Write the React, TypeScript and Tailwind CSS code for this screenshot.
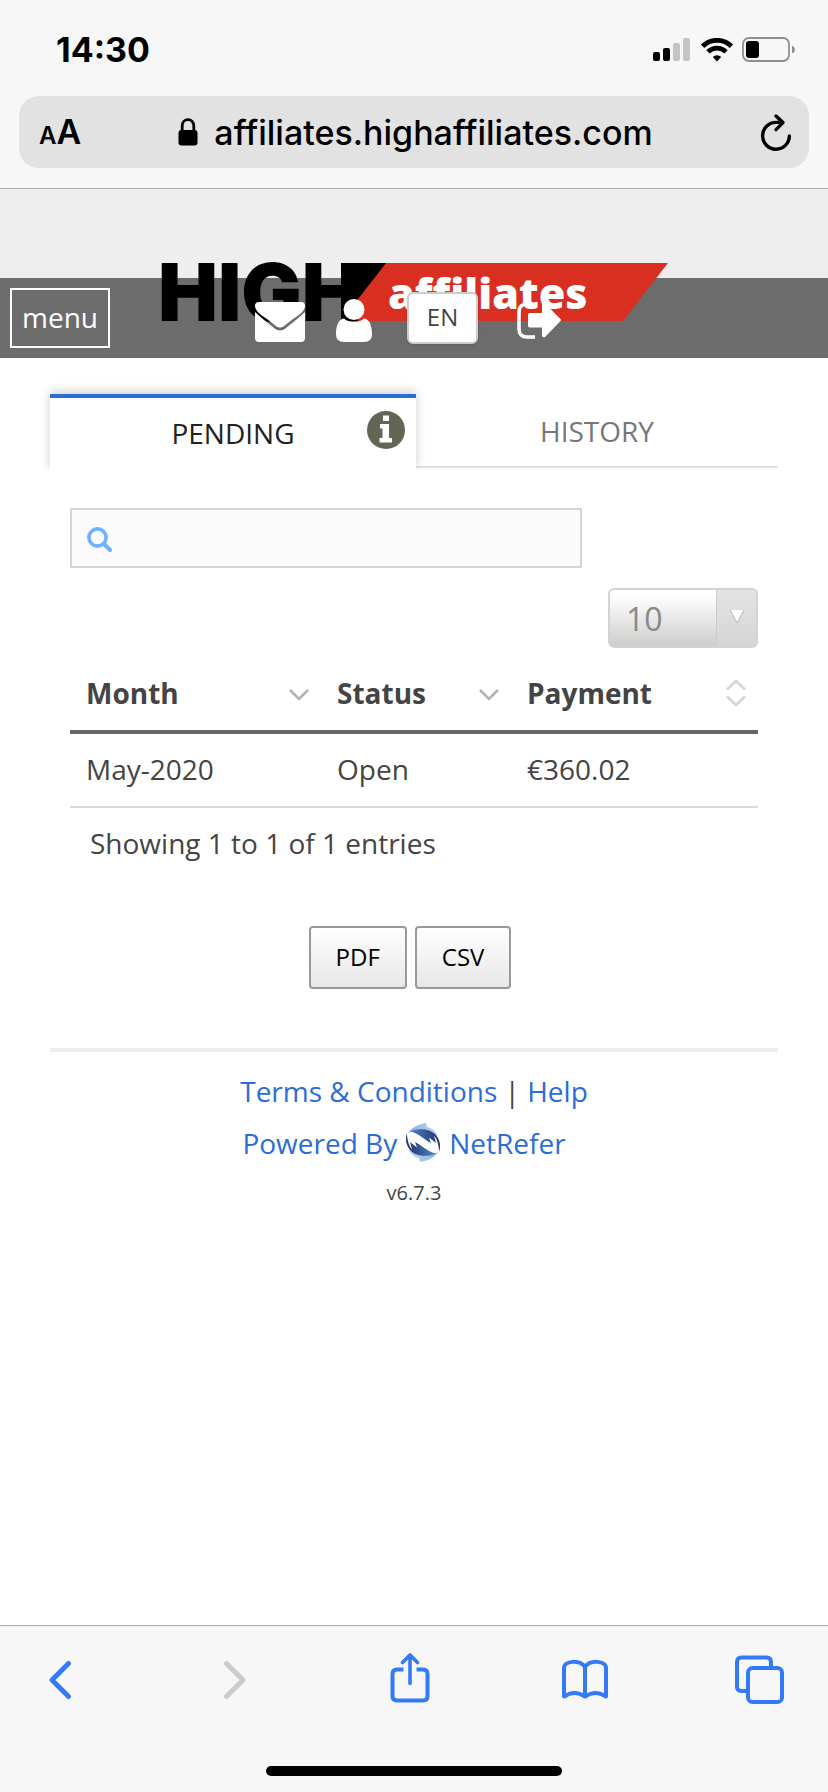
import type { ReactNode } from "react";

const sans = "font-['Open_Sans','Noto_Sans',sans-serif]";
const system = "font-['Inter','Liberation_Sans',sans-serif]";

const months = [{ month: "May-2020", status: "Open", payment: "€360.02" }];

function StatusBar() {
  return (
    <div className="flex items-center justify-between pt-7 pl-14 pr-8">
      <span className="text-[34px] leading-11 font-bold">14:30</span>
      <div className="flex items-center gap-2">
        <svg width="40" height="24" viewBox="0 0 40 24">
          <rect x="1" y="14" width="7" height="9" rx="2" />
          <rect x="11" y="10" width="7" height="13" rx="2" />
          <rect x="21" y="5" width="7" height="18" rx="2" fill="#c4c4c4" />
          <rect x="31" y="0" width="7" height="23" rx="2" fill="#c4c4c4" />
        </svg>
        <svg width="34" height="24" viewBox="0 0 34 24">
          <g fill="none" stroke="#000" strokeWidth="4.8">
            <path d="M2.6 8.2 A20.5 20.5 0 0 1 31.4 8.2" />
            <path d="M8 13.9 A12.6 12.6 0 0 1 26 13.9" />
          </g>
          <path d="M17 23.4 L12.8 19 A6 6 0 0 1 21.2 19 Z" />
        </svg>
        <svg width="54" height="26" viewBox="0 0 54 26">
          <rect x="1" y="1" width="46" height="23" rx="6" fill="none" stroke="#8f8f8f" strokeWidth="1.8" />
          <rect x="4" y="4" width="13" height="17" rx="3" />
          <path d="M50 8.5 Q53 10 53 12.5 T50 16.5 Z" fill="#8f8f8f" />
        </svg>
      </div>
    </div>
  );
}

function AddressBar() {
  return (
    <div className="mx-[19px] mt-6 flex h-18 items-center justify-between rounded-[20px] bg-[#e2e2e3] pl-5 pr-[17px]">
      <button aria-label="Text size" className="flex w-10 items-baseline pt-1 font-semibold">
        <span className="text-[24px] leading-10">A</span>
        <span className="text-[34px] leading-10">A</span>
      </button>
      <div className="flex items-center gap-4">
        <svg width="20" height="28" viewBox="0 0 20 28">
          <rect x="0.5" y="12" width="19" height="15.5" rx="3" />
          <path d="M4.2 13 V8 C4.2 -0.5 15.8 -0.5 15.8 8 V13" fill="none" stroke="#000" strokeWidth="2.8" />
        </svg>
        <span className="text-[34px] font-medium">affiliates.highaffiliates.com</span>
      </div>
      <button aria-label="Reload" className="flex w-10 justify-end">
        <svg width="34" height="40" viewBox="0 0 34 40" fill="none" stroke="#000" strokeWidth="3.4" strokeLinecap="round" strokeLinejoin="round">
          <path d="M31.4 24 A13.4 13.4 0 1 1 18 10.4 L24 10.4" />
          <path d="M18 4 L25 10.6 L18 17.6" />
        </svg>
      </button>
    </div>
  );
}

function Logo() {
  return (
    <svg width="508" height="62" viewBox="0 0 508 62" className="absolute left-1/2 top-[73px] -ml-[253px] overflow-visible">
      <path d="M180 1 H230 L182 59 H180 Z" />
      <path d="M225 1 H507 L462 59 H180 Z" fill="#d92f21" />
      <text x="-3" y="59" fontSize="80" fontWeight="900" fontFamily="Inter, sans-serif">HIGH</text>
      <text x="227" y="47" fontSize="43" fontWeight="800" fill="#fff" fontFamily="Open Sans, sans-serif">affiliates</text>
    </svg>
  );
}

function SiteHeader() {
  return (
    <header className="relative bg-[#eee] pt-[89px]">
      <div className="flex h-20 items-center bg-[#6c6c6c] px-2.5">
        <button className="h-15 w-25 border-2 border-white pb-0.5 text-[28px] leading-10 text-white">menu</button>
      </div>
      <Logo />
      <nav className="absolute bottom-3.5 left-[255px] flex items-end">
        <button aria-label="Messages" className="mb-0.5">
          <svg width="50" height="40" viewBox="0 0 50 40" fill="#fff">
            <path d="M4 0 H46 Q50 0 50 4 C50 9 44 13 38 17 L29 24 Q25 27 21 24 L12 17 C6 13 0 9 0 4 Q0 0 4 0 Z" />
            <path d="M0 10 C5 15 12 20 19 26 Q25 31 31 26 C38 20 45 15 50 10 V36 Q50 40 46 40 H4 Q0 40 0 36 Z" />
          </svg>
        </button>
        <button aria-label="Account" className="mb-0.5 ml-[31px]">
          <svg width="36" height="43" viewBox="0 0 36 43" fill="#fff">
            <circle cx="18" cy="10.5" r="10.5" />
            <path d="M8 19.5 C12 24 24 24 28 19.5 C34 20 36 28 36 35 Q36 43 28 43 H8 Q0 43 0 35 C0 28 2 20 8 19.5 Z" />
          </svg>
        </button>
        <button className="ml-[35px] h-[52px] w-[71px] rounded-md border-2 border-[#ccc] bg-white pb-0.5 text-[24px] text-[#444] shadow-sm">
          EN
        </button>
        <button aria-label="Sign out" className="mb-1 ml-[39px]">
          <svg width="46" height="38" viewBox="0 0 46 38" fill="#fff">
            <path d="M18 35 H10 Q2 35 2 27 V10 Q2 2 10 2" fill="none" stroke="#fff" strokeWidth="3.6" />
            <path d="M13 11 H25 V2 Q26 0 28 1.5 L43.5 17 Q44.5 18 43.5 19 L28 35 Q26 36 25 34 V25.5 H13 Q11 25.5 11 23.5 V13 Q11 11 13 11 Z" />
          </svg>
        </button>
      </nav>
    </header>
  );
}

function Tabs() {
  return (
    <div role="tablist" className="flex items-start text-[28px]">
      <button
        role="tab"
        aria-selected="true"
        className="relative h-[76px] grow basis-[366px] border-t-4 border-[#2c6dd5] bg-white pb-0.5 text-[#222] shadow-[0_-2px_10px_rgba(0,0,0,0.2)] [clip-path:inset(-12px_-12px_0_-12px)]"
      >
        PENDING
        <svg width="38" height="38" viewBox="0 0 38 38" className="absolute top-[13px] right-[11px]">
          <circle cx="19" cy="19" r="19" fill="#646555" />
          <path d="M16 4.5 H22 V10 H16 Z M13 13 H22 V27 H25 V31.5 H12.5 V27 H15.5 V17.5 H13 Z" fill="#fff" />
        </svg>
      </button>
      <button role="tab" aria-selected="false" className="h-[74px] grow basis-[362px] border-b-2 border-[#e1e1e1] pt-0.5 text-[#777]">
        HISTORY
      </button>
    </div>
  );
}

function SortMark({ both }: { both?: boolean }) {
  return (
    <svg width="20" height="28" viewBox="0 0 20 28" fill="none" stroke={both ? "#d6d6d6" : "#b3b3b3"} strokeWidth="2.6">
      {both ? <path d="M1 10.5 L10 2 L19 10.5 M1 17.5 L10 26 L19 17.5" /> : <path d="M1 11 L10 20 L19 11" />}
    </svg>
  );
}

function HeadCell({ children, both }: { children: ReactNode; both?: boolean }) {
  return (
    <th className="p-0 text-left font-bold">
      <button className="flex h-[76px] w-full items-center justify-between pt-0.5 pr-3 pl-4">
        {children}
        <SortMark both={both} />
      </button>
    </th>
  );
}

function PendingPanel() {
  return (
    <section className="px-5 pt-[38px]">
      <div className="relative mr-44">
        <svg width="26" height="26" viewBox="0 0 26 26" fill="none" stroke="#70b0ff" strokeLinecap="round" className="absolute top-[19px] left-[17px]">
          <circle cx="10.5" cy="10.5" r="8.6" strokeWidth="3.6" />
          <path d="M17.5 17.5 L23 23" strokeWidth="4" />
        </svg>
        <input type="search" aria-label="Search" className="block h-15 w-full border-2 border-[#d5d5d5] bg-[#fbfbfb] pl-14 text-[28px]" />
      </div>
      <div className="mt-5 flex justify-end">
        <div className="relative w-[150px]">
          <select
            aria-label="Entries per page"
            defaultValue="10"
            className="block h-15 w-full appearance-none rounded-md border-2 border-[#d3d3d3] bg-linear-to-b from-white from-10% to-[#cdcdcd] pt-0.5 pl-4 text-[32px] text-[#888]"
          >
            <option>10</option>
            <option>25</option>
            <option>50</option>
          </select>
          <span className="pointer-events-none absolute inset-y-0.5 right-0.5 flex w-10 items-center justify-center rounded-r border-l border-[#ccc] bg-linear-to-b from-[#e4e4e4] to-[#d5d5d5]">
            <svg width="16" height="16" viewBox="0 0 16 16">
              <path d="M1 0 H15 L8 13 Z" fill="#fff" />
              <path d="M1 0 L8 13 L15 0" fill="none" stroke="#b5b5b5" strokeWidth="1" />
            </svg>
          </span>
        </div>
      </div>
      <table className="mt-1.5 w-full table-fixed border-collapse text-[28px] leading-10">
        <colgroup>
          <col className="w-[251px]" />
          <col className="w-[190px]" />
          <col />
        </colgroup>
        <thead>
          <tr className="border-b-4 border-[#666]">
            <HeadCell>Month</HeadCell>
            <HeadCell>Status</HeadCell>
            <HeadCell both>Payment</HeadCell>
          </tr>
        </thead>
        <tbody>
          {months.map((m) => (
            <tr key={m.month} className="h-[75px] border-b-2 border-[#dadada]">
              <td className="px-4 pb-0.5">{m.month}</td>
              <td className="px-4 pb-0.5">{m.status}</td>
              <td className="px-4 pb-0.5">{m.payment}</td>
            </tr>
          ))}
        </tbody>
      </table>
      <p className="mt-[15px] pl-5 text-[28px] leading-10">Showing 1 to 1 of 1 entries</p>
      <div className="mt-[63px] flex justify-center gap-2 pr-2 text-[24px] text-black">
        <button className="h-[63px] rounded border-2 border-[#999] bg-linear-to-b from-white to-[#e7e7e7] px-[25px] pb-0.5">PDF</button>
        <button className="h-[63px] rounded border-2 border-[#999] bg-linear-to-b from-white to-[#e7e7e7] px-[25px] pb-0.5">CSV</button>
      </div>
    </section>
  );
}

function NetReferMark() {
  return (
    <svg width="36" height="40" viewBox="0 0 36 40">
      <defs>
        <linearGradient id="nr-dark" x1="0" x2="1">
          <stop offset="0" stopColor="#5585c4" />
          <stop offset="1" stopColor="#1f2f6d" />
        </linearGradient>
        <linearGradient id="nr-light" x1="0" x2="1">
          <stop offset="0" stopColor="#85b3e3" />
          <stop offset="1" stopColor="#bcd7f1" />
        </linearGradient>
        <g id="nr-half">
          <path d="M3 10 C7 4 14 1 21 0 L22 4 C27 5 31 8 33 13 C25 6 13 5 3 10 Z" fill="url(#nr-light)" />
          <path d="M5 8.5 C12 5 25 5 31 12 C35 17 36 23 34 29 C34 22 32 16 29 12.5 L31 20 L24 14.5 L26 20 C20 17 13 10 5 8.5 Z" fill="url(#nr-dark)" />
        </g>
      </defs>
      <use href="#nr-half" />
      <use href="#nr-half" transform="rotate(180 18 19.5)" />
    </svg>
  );
}

function SiteFooter() {
  return (
    <footer className="mt-[59px] border-t-4 border-[#eee] pt-[19px] text-center text-[28px] leading-10">
      <p>
        <a href="#terms" className="text-[#2c6dd5]">Terms &amp; Conditions</a> | <a href="#help" className="text-[#2c6dd5]">Help</a>
      </p>
      <p className="mt-3 pr-5">
        <a href="#netrefer" className="inline-flex items-center gap-2 text-[#2c6dd5]">
          Powered By
          <NetReferMark />
          NetRefer
        </a>
      </p>
      <p className="mt-2.5 text-[20px]">v6.7.3</p>
    </footer>
  );
}

function Toolbar() {
  return (
    <nav className="border-t border-[#aaabab] bg-[#f7f7f7] pt-6 pb-4 text-[#347af6]">
      <div className="flex justify-between pr-[43px] pl-[34px]">
        <button aria-label="Back">
          <svg width="52" height="60" viewBox="0 0 52 60" fill="none" stroke="currentColor" strokeWidth="5" strokeLinecap="round" strokeLinejoin="round">
            <path d="M34.5 13.5 L18 30 L34.5 46.5" />
          </svg>
        </button>
        <button aria-label="Forward" className="text-[#cbcbcb]">
          <svg width="52" height="60" viewBox="0 0 52 60" fill="none" stroke="currentColor" strokeWidth="5" strokeLinecap="round" strokeLinejoin="round">
            <path d="M17.5 13.5 L34 30 L17.5 46.5" />
          </svg>
        </button>
        <button aria-label="Share">
          <svg width="52" height="60" viewBox="0 0 52 60" fill="none" stroke="currentColor" strokeWidth="4">
            <path d="M19.5 19.5 H13 Q8.5 19.5 8.5 24 V46 Q8.5 50.5 13 50.5 H39 Q43.5 50.5 43.5 46 V24 Q43.5 19.5 39 19.5 H32.5" />
            <path d="M26 33.5 V5.5 M18.5 12.5 L26 5 L33.5 12.5" strokeWidth="3.6" strokeLinecap="round" strokeLinejoin="round" />
          </svg>
        </button>
        <button aria-label="Bookmarks">
          <svg width="52" height="60" viewBox="0 0 52 60" fill="none" stroke="currentColor" strokeWidth="4" strokeLinecap="round" strokeLinejoin="round">
            <path d="M27 46.5 Q16.5 39.5 6 46.5 V18 C6 10.5 22 9.5 27 17 C32 9.5 48 10.5 48 18 V46.5 Q37.5 39.5 27 46.5 Z M27 17 V46" />
          </svg>
        </button>
        <button aria-label="Tabs">
          <svg width="52" height="60" viewBox="0 0 52 60" fill="none" stroke="currentColor" strokeWidth="4">
            <rect x="15" y="18" width="34" height="34" rx="4.5" />
            <path d="M15 41 H8.5 Q4 41 4 36.5 V12 Q4 7.5 8.5 7.5 H33.5 Q38 7.5 38 12 V18" />
          </svg>
        </button>
      </div>
      <div className="mx-auto mt-14 h-2.5 w-74 rounded-full bg-black" />
    </nav>
  );
}

export default function App() {
  return (
    <div className={`flex min-h-screen flex-col bg-white text-[#444] ${sans}`}>
      <div className={`border-b border-[#a9aaaa] bg-[#f7f7f7] pb-5 text-black ${system}`}>
        <StatusBar />
        <AddressBar />
      </div>
      <SiteHeader />
      <main className="flex-1 px-[50px] pt-9">
        <Tabs />
        <PendingPanel />
        <SiteFooter />
      </main>
      <Toolbar />
    </div>
  );
}
